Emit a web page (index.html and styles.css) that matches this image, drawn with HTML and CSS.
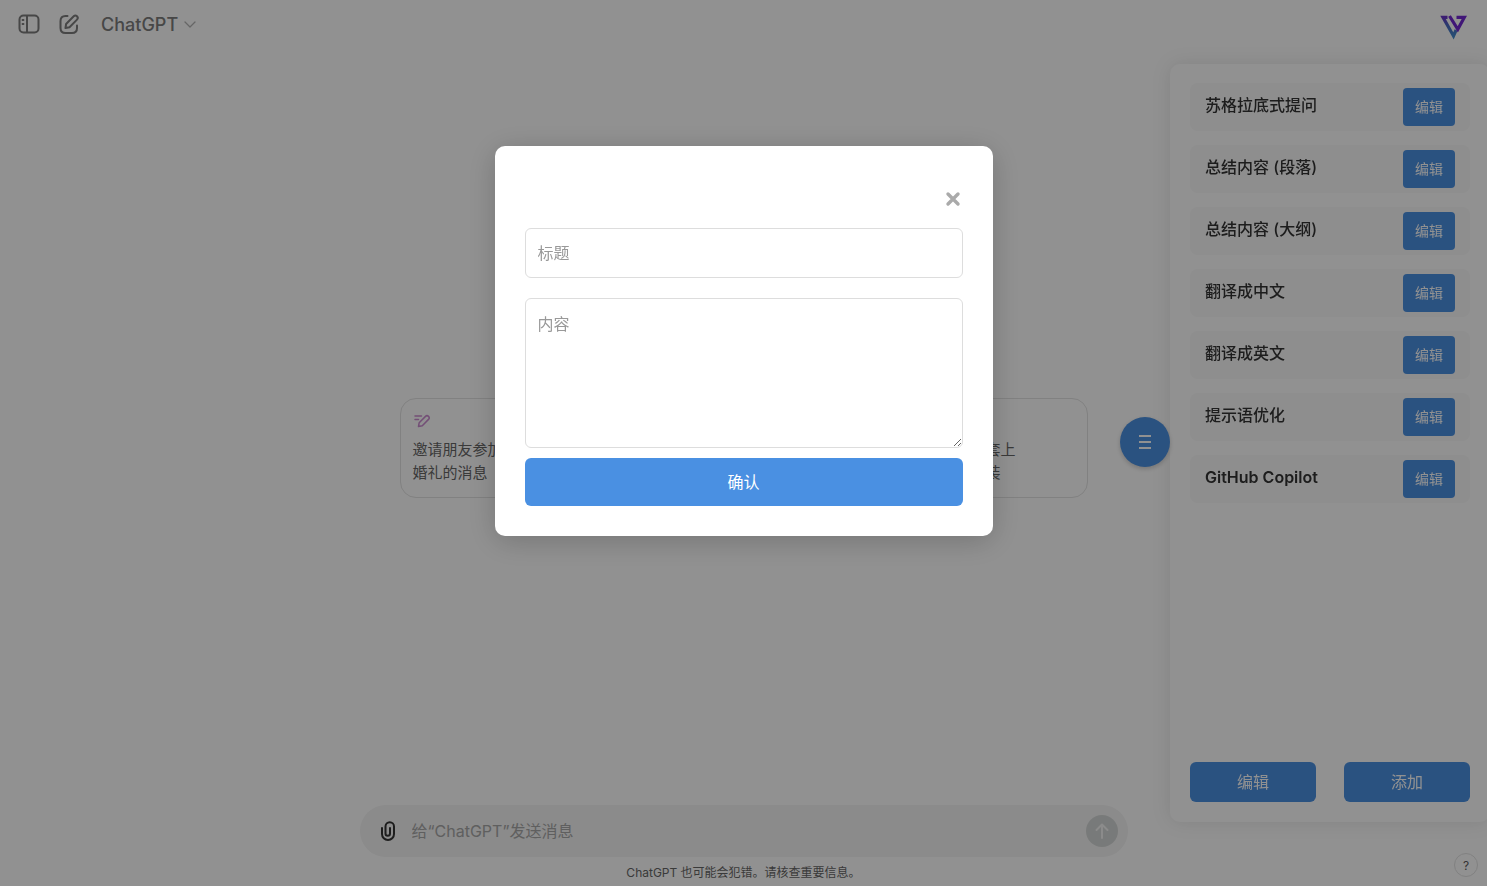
FILE: index.html
```html
<!DOCTYPE html>
<html lang="zh-CN">
<head>
    <meta charset="UTF-8">
    <meta name="viewport" content="width=device-width, initial-scale=1.0">
    <title>ChatGPT</title>
    <link rel="stylesheet" href="styles.css">
</head>
<body>
    <div class="app">
        <header class="header">
            <button class="icon-btn" aria-label="侧边栏">
                <svg width="24" height="24" viewBox="0 0 24 24" fill="none" stroke="currentColor" stroke-width="2" stroke-linecap="round">
                    <rect x="2.500" y="3.500" width="19" height="17" rx="4"/>
                    <path d="M10 4v16"/>
                    <path d="M5.500 8h1M5.500 12h1" stroke-width="1.800"/>
                </svg>
            </button>
            <button class="icon-btn" aria-label="新聊天">
                <svg width="24" height="24" viewBox="0 0 24 24" fill="none" stroke="currentColor" stroke-width="2" stroke-linecap="round" stroke-linejoin="round">
                    <path d="M10.500 4H8.500C5 4 3.500 5.500 3.500 9v7c0 3.500 1.500 5 5 5H15c3.500 0 5-1.500 5-5v-2.500"/>
                    <path d="M8.500 16l.600-4 7.600-7.700a2.300 2.300 0 0 1 3.300 3.300L12.500 15.300z"/>
                </svg>
            </button>
            <button class="model-btn">
                ChatGPT
                <svg width="14" height="14" viewBox="0 0 14 14" fill="none" stroke="currentColor" stroke-width="1.300" stroke-linecap="round" stroke-linejoin="round">
                    <path d="M2 5l5 5 5-5"/>
                </svg>
            </button>
            <svg class="logo" width="28" height="26" viewBox="0 0 28 26" fill="none" stroke-width="3.200">
                <defs>
                    <linearGradient id="logoLeft" x1="0" y1="0" x2="0" y2="1">
                        <stop offset="0" stop-color="#6a35c8"/>
                        <stop offset="0.400" stop-color="#4a66c0"/>
                        <stop offset="1" stop-color="#4488cc"/>
                    </linearGradient>
                </defs>
                <path d="M7.500 3.400H3L13.500 22l2.600-6" stroke="url(#logoLeft)"/>
                <path d="M9.500 2l8.300 13.300L24.300 3.400H16.500" stroke="#7228d2"/>
            </svg>
        </header>

        <main class="main">
            <div class="cards">
                <button class="card">
                    <svg width="18" height="18" viewBox="0 0 18 18" fill="none" stroke="#cb8bd0" stroke-width="1.500" stroke-linecap="round" stroke-linejoin="round">
                        <path d="M2 4h6.500M2 7.500h3.500"/>
                        <path d="M5.500 14.500l.700-3.800 6.300-6.300a2.100 2.100 0 0 1 3 3L9.300 13.700z"/>
                    </svg>
                    <span>邀请朋友参加<br>婚礼的消息</span>
                </button>
                <button class="card card-last"><span>挑选一套上<br>镜的服装</span></button>
            </div>
        </main>

        <footer class="footer">
            <form class="composer">
                <button type="button" class="attach" aria-label="附件">
                    <svg width="24" height="24" viewBox="0 0 24 24" fill="none" stroke="currentColor" stroke-width="2" stroke-linecap="round">
                        <path d="M6 9v6a6 6 0 0 0 12 0V7.500a4 4 0 0 0-8.500 0V14.500a2.200 2.200 0 0 0 4.500 0V9"/>
                    </svg>
                </button>
                <input type="text" placeholder="给“ChatGPT”发送消息" aria-label="给“ChatGPT”发送消息">
                <button type="button" class="send" aria-label="发送">
                    <svg width="32" height="32" viewBox="0 0 32 32" fill="none" stroke="currentColor" stroke-width="2" stroke-linecap="round" stroke-linejoin="round">
                        <path d="M16 23V10M10.500 15l5.500-5.500 5.500 5.500"/>
                    </svg>
                </button>
            </form>
            <p class="note">ChatGPT 也可能会犯错。请核查重要信息。</p>
        </footer>
        <button class="help">?</button>
    </div>

    <aside class="panel">
        <button class="toggle" aria-label="菜单">
            <svg width="12" height="14" viewBox="0 0 12 14" stroke="currentColor" stroke-width="2">
                <path d="M0 1h12M0 7h12M0 13h12"/>
            </svg>
        </button>
        <ul class="prompts">
            <li><span>苏格拉底式提问</span><button>编辑</button></li>
            <li><span>总结内容 (段落)</span><button>编辑</button></li>
            <li><span>总结内容 (大纲)</span><button>编辑</button></li>
            <li><span>翻译成中文</span><button>编辑</button></li>
            <li><span>翻译成英文</span><button>编辑</button></li>
            <li><span>提示语优化</span><button>编辑</button></li>
            <li><span class="latin">GitHub Copilot</span><button>编辑</button></li>
        </ul>
        <div class="panel-actions">
            <button>编辑</button>
            <button>添加</button>
        </div>
    </aside>

    <div class="overlay">
        <form class="modal">
            <button type="button" class="close" aria-label="关闭">
                <svg width="20" height="20" viewBox="0 0 20 20" stroke="currentColor" stroke-width="3.400" stroke-linecap="round">
                    <path d="M5 5l10 10M15 5L5 15"/>
                </svg>
            </button>
            <input type="text" placeholder="标题" aria-label="标题">
            <textarea placeholder="内容" aria-label="内容"></textarea>
            <button type="button" class="confirm">确认</button>
        </form>
    </div>
</body>
</html>
```

FILE: styles.css
```css
* {
    box-sizing: border-box;
}

body {
    margin: 0;
    font-family: Inter, "Noto Sans CJK SC", sans-serif;
    font-size: 16px;
    color: #333;
    background-color: #fff;
    overflow: hidden;
}

button,
input,
textarea {
    font: inherit;
    color: inherit;
    border: none;
    background: none;
    padding: 0;
}

button {
    cursor: pointer;
}

svg {
    display: block;
}

.app {
    display: flex;
    flex-direction: column;
    height: 100vh;
}

/* Top bar */
.header {
    display: flex;
    align-items: center;
    gap: 16px;
    height: 48px;
    padding: 0 19px 0 17px;
    color: #7d7d7d;
}

.model-btn {
    display: flex;
    align-items: center;
    gap: 5px;
    margin-left: 4px;
    font-size: 18px;
    font-weight: 500;
}

.model-btn svg {
    color: #b4b4b4;
}

.logo {
    margin: 6px 0 0 auto;
}

/* Suggestion cards */
.main {
    flex: 1;
    display: flex;
    justify-content: center;
    align-items: center;
    padding-top: 43px;
}

.cards {
    display: grid;
    grid-template-columns: repeat(4, 1fr);
    gap: 16px;
    width: 100%;
    max-width: 688px;
}

.card {
    display: flex;
    flex-direction: column;
    gap: 8px;
    padding: 13px 12px;
    border: 1px solid #e3e3e3;
    border-radius: 16px;
    font-size: 15px;
    line-height: 23px;
    text-align: left;
    color: #666;
}

.card-last {
    grid-column: 4;
    justify-content: flex-end;
}

/* Message box */
.footer {
    display: flex;
    flex-direction: column;
    align-items: center;
}

.composer {
    display: flex;
    align-items: center;
    width: 100%;
    max-width: 768px;
    height: 52px;
    padding: 0 10px 0 16px;
    border-radius: 26px;
    background-color: #f4f4f4;
}

.composer input {
    flex: 1;
    margin-left: 12px;
    outline: none;
}

.composer input::placeholder {
    color: #a8a8a8;
    opacity: 1;
}

.send {
    border-radius: 50%;
    background-color: #d4d7d6;
    color: #f4f4f4;
}

.note {
    margin: 0;
    padding: 6px 0 3px;
    font-size: 12px;
    line-height: 20px;
    color: #666;
}

.help {
    position: absolute;
    right: 9px;
    bottom: 9px;
    width: 24px;
    height: 24px;
    border: 1px solid #e3e3e3;
    border-radius: 50%;
    font-size: 12px;
    color: #5d5d5d;
}

/* Prompt panel */
.panel {
    position: fixed;
    top: 64px;
    bottom: 64px;
    right: -3px;
    display: flex;
    flex-direction: column;
    justify-content: space-between;
    width: 320px;
    padding: 19px 20px 20px;
    border-radius: 10px;
    background-color: #fff;
    box-shadow: 0 0 20px rgba(0, 0, 0, 0.1);
}

.toggle {
    position: absolute;
    left: -50px;
    top: calc(50% - 26px);
    display: flex;
    justify-content: center;
    align-items: center;
    width: 50px;
    height: 50px;
    border-radius: 50%;
    background-color: #4a90e2;
    color: #fff;
    box-shadow: 0 2px 5px rgba(0, 0, 0, 0.2);
}

.prompts {
    display: flex;
    flex-direction: column;
    gap: 14px;
    margin: 0;
    padding: 0;
    list-style: none;
}

.prompts li {
    display: flex;
    justify-content: space-between;
    align-items: center;
    height: 48px;
    padding: 0 15px;
    border-radius: 8px;
    background-color: #f9f9f9;
}

.prompts span {
    padding-bottom: 6px;
    font-weight: 500;
}

.prompts .latin {
    padding-bottom: 4px;
    font-weight: 600;
}

.prompts button {
    height: 38px;
    padding: 0 12px 3px;
    border-radius: 4px;
    font-size: 14px;
    background-color: #4a90e2;
    color: #fff;
}

.panel-actions {
    display: flex;
    justify-content: space-between;
}

.panel-actions button {
    width: 45%;
    height: 40px;
    padding-bottom: 3px;
    border-radius: 6px;
    background-color: #4a90e2;
    color: #fff;
}

/* Dialog */
.overlay {
    position: fixed;
    inset: 0;
    display: flex;
    justify-content: center;
    align-items: flex-start;
    padding-top: 146px;
    background-color: rgba(0, 0, 0, 0.43);
}

.modal {
    display: flex;
    flex-direction: column;
    width: 498px;
    padding: 30px;
    border-radius: 10px;
    background-color: #fff;
    box-shadow: 0 5px 30px rgba(0, 0, 0, 0.2);
}

.close {
    align-self: flex-end;
    margin: 13px 0 19px;
    color: #aaa;
}

.modal input,
.modal textarea {
    padding: 12px;
    border: 1px solid #ddd;
    border-radius: 6px;
    outline: none;
}

.modal input {
    height: 50px;
    margin-bottom: 20px;
}

.modal textarea {
    height: 150px;
    margin-bottom: 10px;
    resize: vertical;
}

.modal ::placeholder {
    color: #999;
    opacity: 1;
}

.confirm {
    height: 48px;
    padding-bottom: 2px;
    border-radius: 6px;
    background-color: #4a90e2;
    color: #fff;
}
```
